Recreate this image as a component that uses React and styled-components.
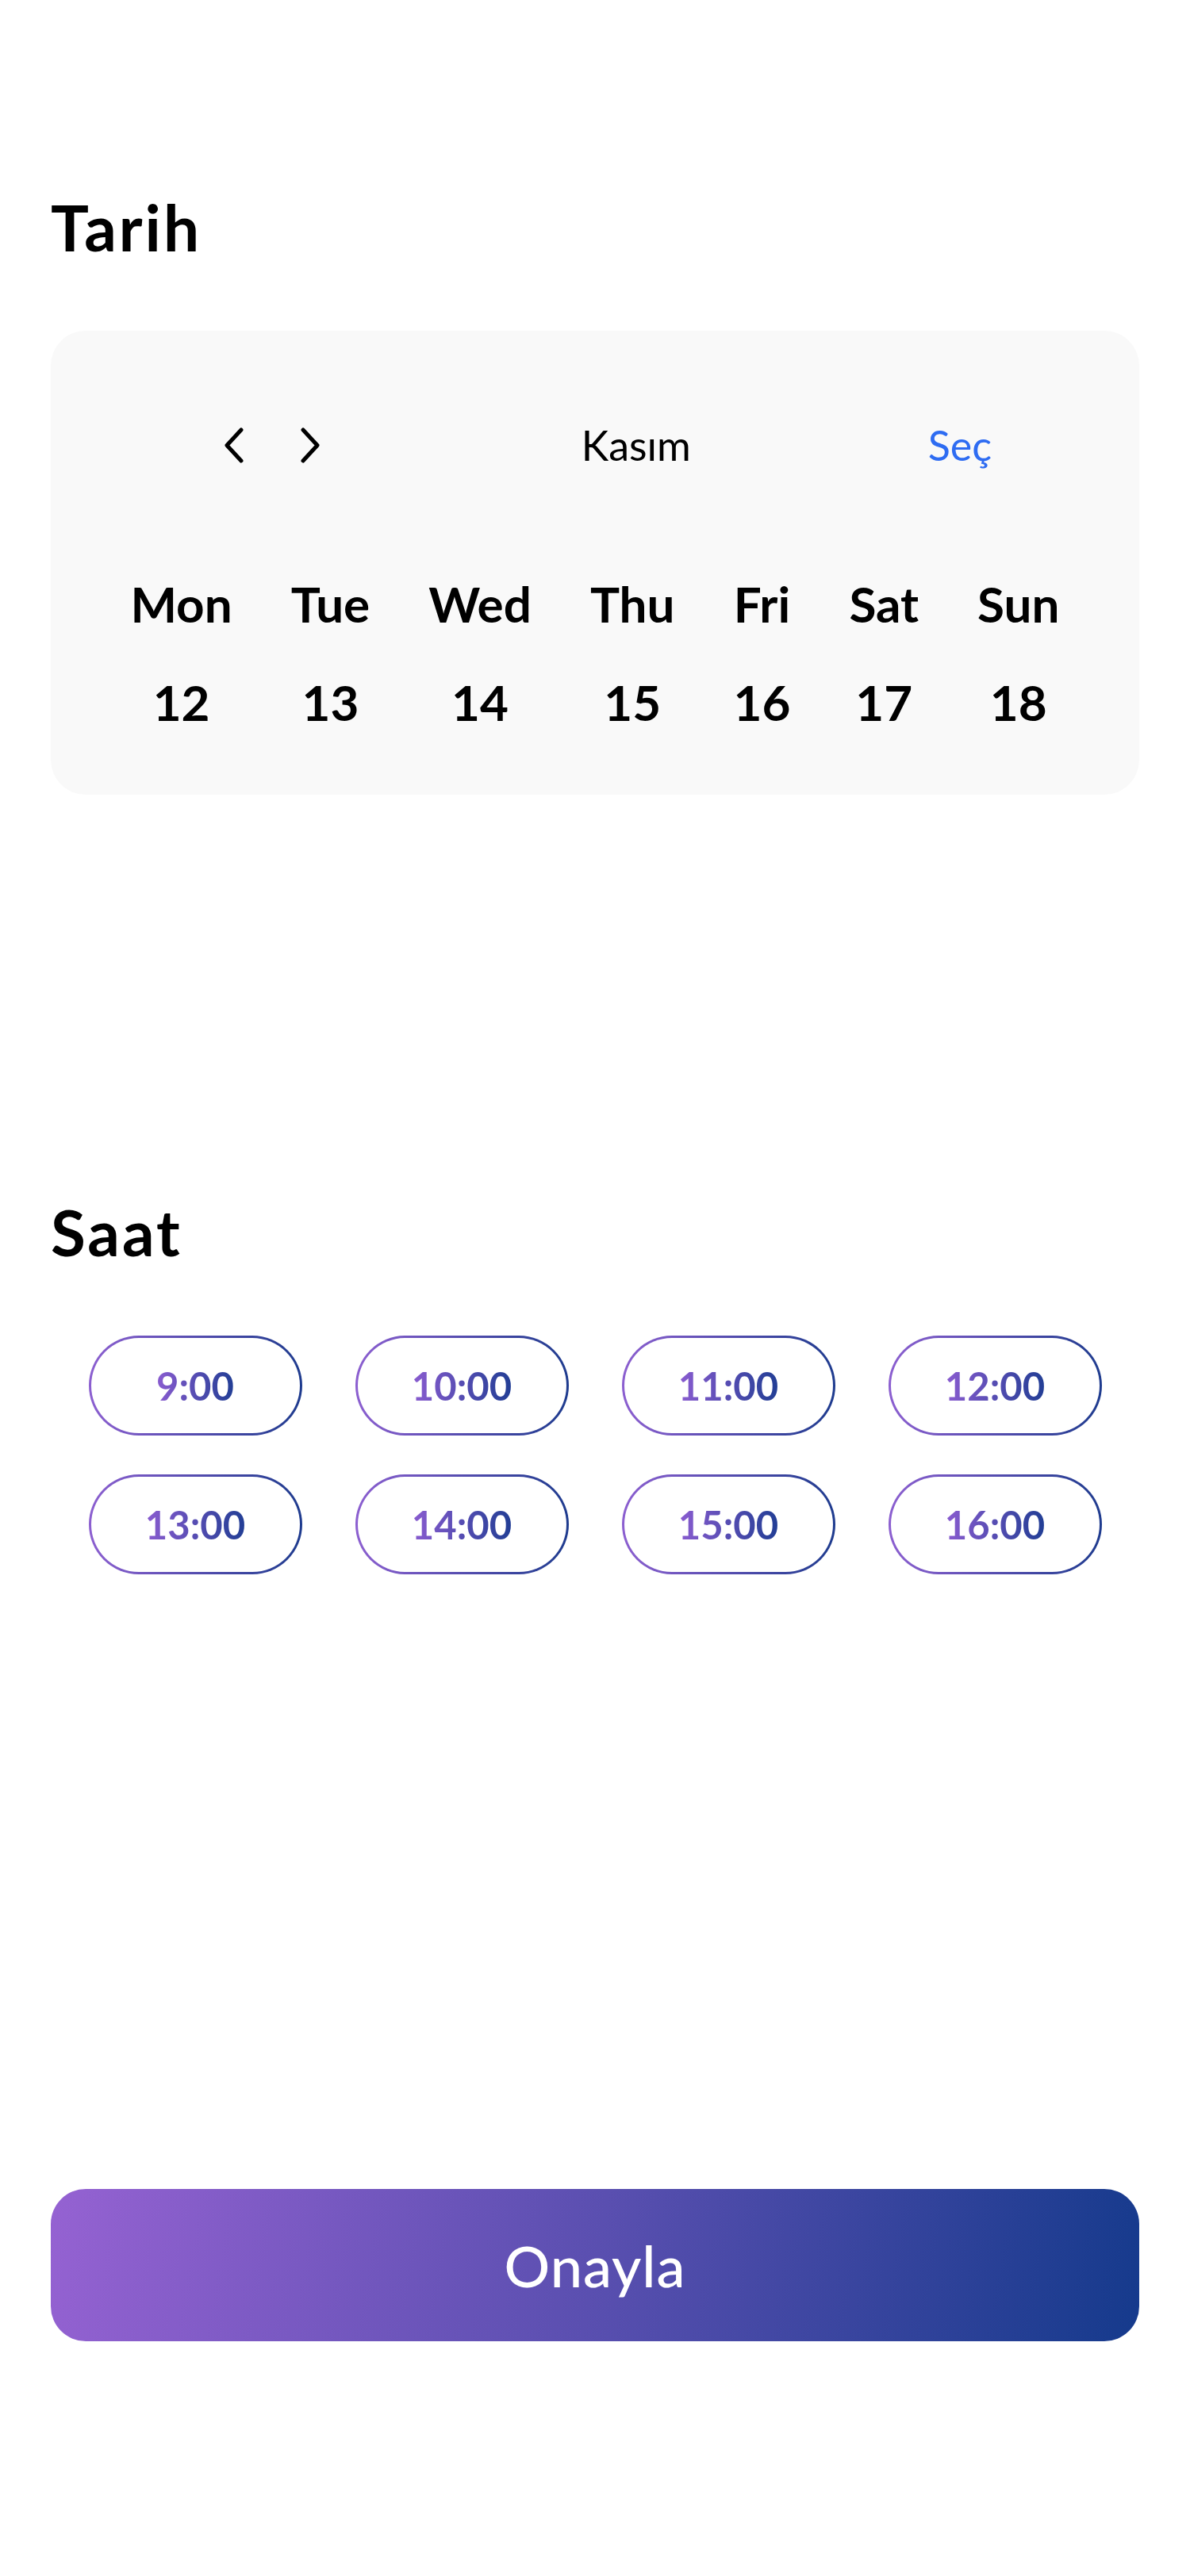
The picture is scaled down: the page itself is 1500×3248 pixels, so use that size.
import styled, { createGlobalStyle } from "styled-components";

const GlobalStyle = createGlobalStyle`
  html, body {
    margin: 0;
    padding: 0;
    background: #ffffff;
  }
  body {
    font-family: "Lato", "Noto Sans", sans-serif;
    color: #000;
  }
`;

const Page = styled.div`
  width: 1500px;
  min-height: 3248px;
  box-sizing: border-box;
  padding: 246px 64px 296px;
  display: flex;
  flex-direction: column;
`;

const Heading = styled.h2`
  margin: 0;
  font-size: 80px;
  line-height: 80px;
  font-weight: 700;
  letter-spacing: 3px;
`;

const Card = styled.div`
  margin-top: 91px;
  background: #f9f9f9;
  border-radius: 44px;
  padding: 112px 0 77px;
  display: flex;
  flex-direction: column;
`;

const MonthBar = styled.div`
  height: 64px;
  display: flex;
  align-items: center;
  justify-content: space-between;
  padding: 0 186px 0 218px;
`;

const Arrows = styled.div`
  display: flex;
  align-items: center;
  gap: 70px;
`;

const ArrowButton = styled.button`
  border: 0;
  background: none;
  padding: 0;
  width: 26px;
  height: 45px;
  display: flex;
  cursor: pointer;
`;

const MonthName = styled.span`
  font-size: 52px;
  line-height: 64px;
  margin-left: 30px;
`;

const SelectLink = styled.span`
  font-size: 52px;
  line-height: 64px;
  color: #2e6cf2;
`;

const Week = styled.div`
  margin-top: 128px;
  display: flex;
  justify-content: center;
  gap: 74px;
`;

const DayCol = styled.div`
  display: flex;
  flex-direction: column;
  align-items: center;
  gap: 44px;
  font-size: 62px;
  line-height: 80px;
  font-weight: 700;
`;

const TimeHeading = styled(Heading)`
  margin-top: 511px;
`;

const Slots = styled.div`
  margin-top: 91px;
  display: grid;
  grid-template-columns: repeat(4, 269px);
  column-gap: 67px;
  row-gap: 49px;
  justify-content: center;
`;

const Slot = styled.button`
  height: 126px;
  border-radius: 63px;
  border: 3px solid transparent;
  background: linear-gradient(#fff, #fff) padding-box,
    linear-gradient(90deg, #8c5fd0, #1e3b8e) border-box;
  display: flex;
  align-items: center;
  justify-content: center;
  padding: 0;
  cursor: pointer;
  font-family: inherit;
`;

const SlotText = styled.span`
  font-size: 49px;
  font-weight: 700;
  background: linear-gradient(90deg, #8a5cd0, #223e95);
  -webkit-background-clip: text;
  background-clip: text;
  color: transparent;
`;

const Confirm = styled.button`
  margin-top: 775px;
  height: 192px;
  border: 0;
  border-radius: 44px;
  background: linear-gradient(100deg, #9562d2 0%, #5a4fb0 50%, #153a8c 100%);
  color: #fff;
  font-family: inherit;
  font-size: 72px;
  font-weight: 500;
  letter-spacing: 1px;
  cursor: pointer;
`;

const days = [
  ["Mon", 12],
  ["Tue", 13],
  ["Wed", 14],
  ["Thu", 15],
  ["Fri", 16],
  ["Sat", 17],
  ["Sun", 18],
];

const hours = ["9:00", "10:00", "11:00", "12:00", "13:00", "14:00", "15:00", "16:00"];

function Chevron({ dir }) {
  const d = dir === "left" ? "M22 3 L4 22.5 L22 42" : "M4 3 L22 22.5 L4 42";
  return (
    <svg width="26" height="45" viewBox="0 0 26 45" fill="none">
      <path d={d} stroke="#000" strokeWidth="5" strokeLinecap="round" strokeLinejoin="round" />
    </svg>
  );
}

export default function App() {
  return (
    <>
      <GlobalStyle />
      <Page>
        <Heading>Tarih</Heading>
        <Card>
          <MonthBar>
            <Arrows>
              <ArrowButton>
                <Chevron dir="left" />
              </ArrowButton>
              <ArrowButton>
                <Chevron dir="right" />
              </ArrowButton>
            </Arrows>
            <MonthName>Kasım</MonthName>
            <SelectLink>Seç</SelectLink>
          </MonthBar>
          <Week>
            {days.map(([name, num]) => (
              <DayCol key={name}>
                <span>{name}</span>
                <span>{num}</span>
              </DayCol>
            ))}
          </Week>
        </Card>

        <TimeHeading>Saat</TimeHeading>
        <Slots>
          {hours.map((h) => (
            <Slot key={h}>
              <SlotText>{h}</SlotText>
            </Slot>
          ))}
        </Slots>

        <Confirm>Onayla</Confirm>
      </Page>
    </>
  );
}
